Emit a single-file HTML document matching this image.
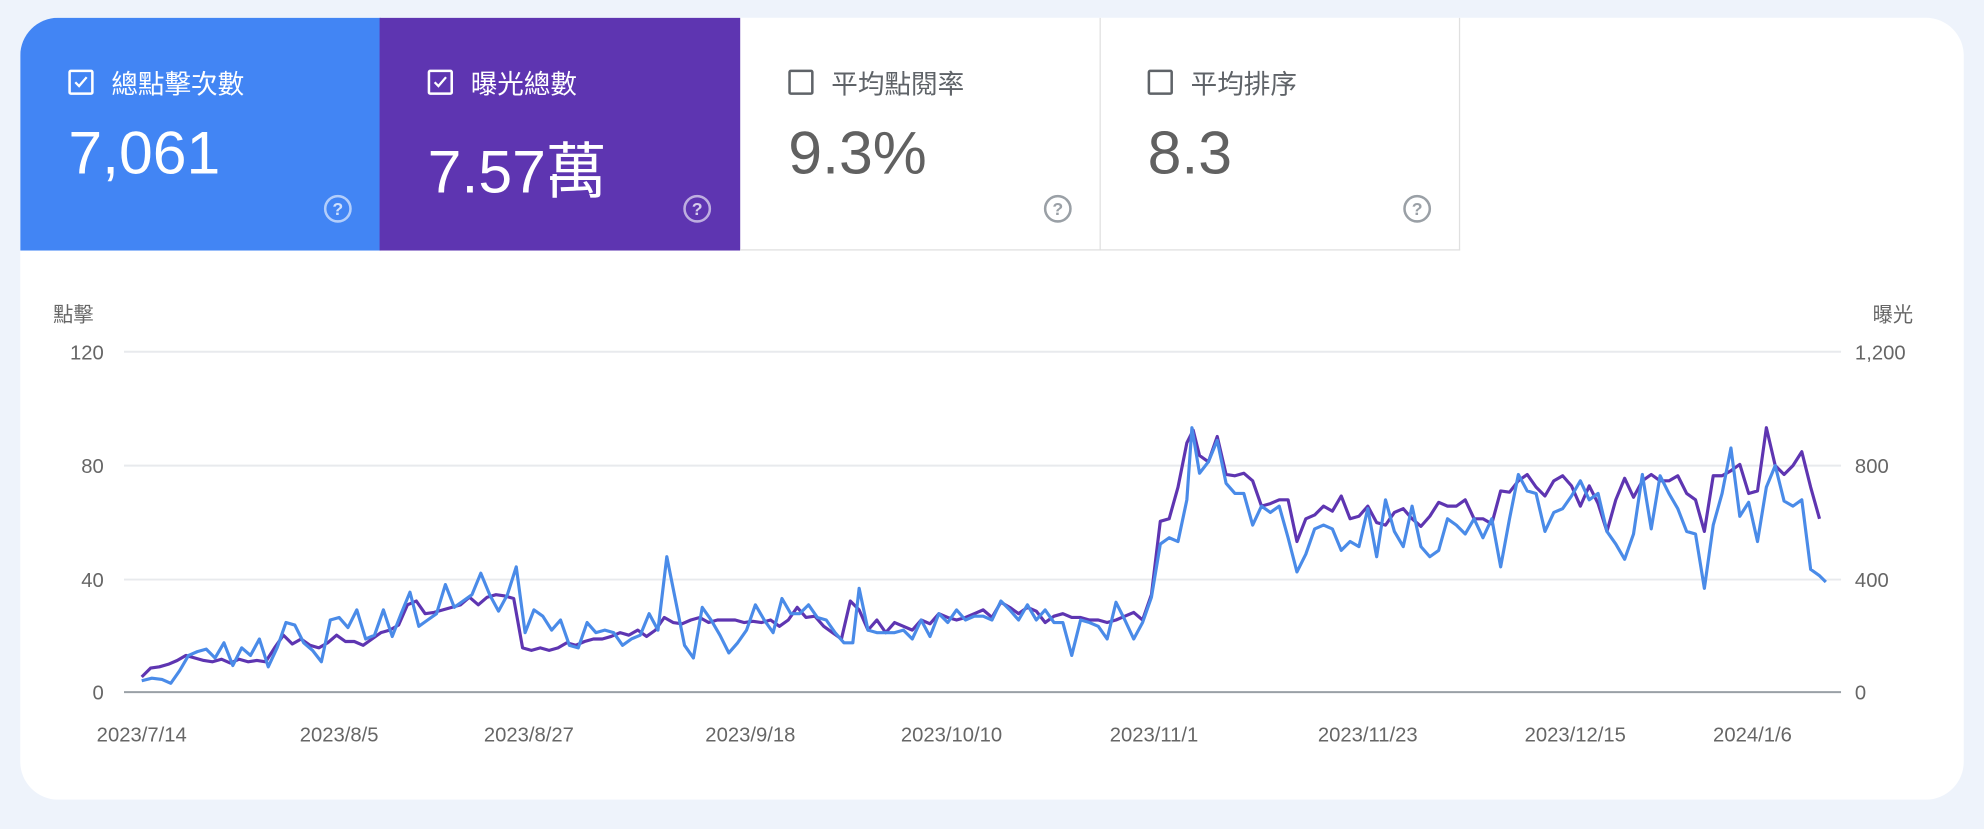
<!DOCTYPE html>
<html><head><meta charset="utf-8"><style>
html,body{margin:0;padding:0;}
body{width:1984px;height:828px;overflow:hidden;background:#eef3fb;font-family:"Liberation Sans","Noto Sans CJK TC",sans-serif;}
#s{position:absolute;left:0;top:0;width:1568px;height:655px;transform:scale(1.26531);transform-origin:0 0;}
.card{position:absolute;left:16px;top:14px;width:1536px;height:618px;background:#fff;border-radius:30px;overflow:hidden;}
.tile{position:absolute;top:0;height:184px;width:285px;box-sizing:border-box;}
.cb{position:absolute;left:38px;top:41px;width:20px;height:20px;border:2px solid #fff;border-radius:2px;box-sizing:border-box;}
.lbl{position:absolute;left:72px;top:37px;font-size:21px;color:#fff;}
.val{position:absolute;left:38px;top:80px;font-size:48px;color:#fff;}
.hp{position:absolute;left:240px;top:140px;width:22px;height:22px;border:2px solid rgba(255,255,255,.6);border-radius:50%;box-sizing:border-box;font-size:14px;line-height:18px;text-align:center;color:rgba(255,255,255,.75);font-weight:bold}
.w .cb{border-color:#5f6368}.w .lbl{color:#5f6368}.w .val{color:#616161}.w .hp{border-color:#9aa0a6;color:#9aa0a6}
</style></head><body><div id="s">
<div class="card">
<div class="tile" style="left:0;background:#4285f4"><div class="cb"><svg width="16" height="16" viewBox="0 0 16 16" style="position:absolute;left:0;top:0"><path d="M3.5 8l3 3 6-7" stroke="#fff" stroke-width="1.8" fill="none"/></svg></div><div class="lbl">總點擊次數</div><div class="val">7,061</div><div class="hp">?</div></div>
<div class="tile" style="left:284px;background:#5e35b1"><div class="cb"><svg width="16" height="16" viewBox="0 0 16 16" style="position:absolute;left:0;top:0"><path d="M3.5 8l3 3 6-7" stroke="#fff" stroke-width="1.8" fill="none"/></svg></div><div class="lbl">曝光總數</div><div class="val" style="top:82px">7.57萬</div><div class="hp">?</div></div>
<div class="tile w" style="left:569px;border-right:1px solid #e0e0e0;border-bottom:1px solid #e0e0e0"><div class="cb"></div><div class="lbl">平均點閱率</div><div class="val">9.3%</div><div class="hp">?</div></div>
<div class="tile w" style="left:853px;border-right:1px solid #e0e0e0;border-bottom:1px solid #e0e0e0"><div class="cb"></div><div class="lbl">平均排序</div><div class="val">8.3</div><div class="hp">?</div></div>
</div>
<svg style="position:absolute;left:0;top:0" width="1568" height="655" font-family="Liberation Sans, Noto Sans CJK TC, sans-serif" font-size="16" fill="#666">
<text x="42" y="254">點擊</text><text x="1480" y="254">曝光</text>
<g stroke="#e8eaed" stroke-width="1.5"><line x1="98" y1="278" x2="1455" y2="278"/><line x1="98" y1="368" x2="1455" y2="368"/><line x1="98" y1="458" x2="1455" y2="458"/></g>
<line x1="98" y1="547" x2="1455" y2="547" stroke="#9aa0a6" stroke-width="1.5"/>
<g text-anchor="end"><text x="82" y="284">120</text><text x="82" y="374">80</text><text x="82" y="464">40</text><text x="82" y="553">0</text></g>
<g><text x="1466" y="284">1,200</text><text x="1466" y="374">800</text><text x="1466" y="464">400</text><text x="1466" y="553">0</text></g>
<g text-anchor="middle"><text x="112" y="586">2023/7/14</text><text x="268" y="586">2023/8/5</text><text x="418" y="586">2023/8/27</text><text x="593" y="586">2023/9/18</text><text x="752" y="586">2023/10/10</text><text x="912" y="586">2023/11/1</text><text x="1081" y="586">2023/11/23</text><text x="1245" y="586">2023/12/15</text><text x="1385" y="586">2024/1/6</text></g>
<polyline fill="none" stroke="#5e35b1" stroke-width="2.5" stroke-linejoin="round" points="112,535 119,528 126,527 133,525 140,522 147,518 154,520 161,522 168,523 175,521 182,524 189,521 196,523 203,522 210,523 217,512 224,502 231,509 238,505 245,510 252,512 259,508 266,502 273,507 280,507 287,510 294,505 301,500 308,498 315,494 322,478 329,475 336,485 343,484 350,482 357,480 364,478 371,472 378,478 385,472 392,470 399,471 406,473 413,512 420,514 427,512 434,514 441,512 448,508 455,510 462,507 469,505 476,505 483,503 490,500 497,502 504,498 511,503 518,498 525,488 532,492 539,493 546,490 553,488 560,492 567,490 574,490 581,490 588,492 595,491 602,492 609,490 616,495 623,490 630,480 637,488 644,487 651,495 658,500 665,505 672,475 679,482 686,498 693,490 700,500 707,492 714,495 721,498 728,490 735,493 742,485 749,488 756,490 763,488 770,485 777,482 784,488 791,476 798,480 805,485 812,480 819,483 826,492 833,487 840,485 847,488 854,488 861,490 868,490 875,492 882,490 889,487 896,484 903,490 910,470 917,412 924,410 931,385 938,350 943,340 948,360 955,365 962,345 969,375 976,376 983,374 990,380 997,400 1004,398 1011,395 1018,395 1025,428 1032,410 1039,407 1046,400 1053,404 1060,392 1067,410 1074,408 1081,400 1088,413 1095,415 1102,405 1109,402 1116,410 1123,416 1130,408 1137,397 1144,400 1151,400 1158,395 1165,410 1172,410 1179,414 1186,388 1193,389 1200,380 1207,375 1214,385 1221,392 1228,380 1235,376 1242,384 1249,400 1256,384 1263,398 1270,420 1277,395 1284,378 1291,393 1298,380 1305,375 1312,380 1319,380 1326,376 1333,390 1340,395 1347,420 1354,376 1361,376 1368,372 1375,367 1382,390 1389,388 1396,338 1403,368 1410,375 1417,368 1424,357 1431,385 1438,410"/>
<polyline fill="none" stroke="#4a8be8" stroke-width="2.5" stroke-linejoin="round" points="112,538 120,536 128,537 135,540 142,530 149,518 156,515 163,513 170,520 177,508 184,526 191,512 198,518 205,505 212,527 219,512 226,492 233,494 240,508 247,514 254,523 261,490 268,488 275,496 282,482 289,505 296,502 303,482 310,503 317,485 324,468 331,495 338,490 345,485 352,462 359,480 366,475 373,470 380,453 387,470 394,483 401,470 408,448 415,500 422,482 429,487 436,498 443,490 450,510 457,512 464,492 471,500 478,498 485,500 492,510 499,505 506,502 513,485 520,498 527,440 534,475 541,510 548,520 555,480 562,490 569,502 576,516 583,508 590,498 597,478 604,490 611,500 618,473 625,485 632,485 639,478 646,488 653,490 660,500 667,508 674,508 679,465 686,498 693,500 700,500 707,500 714,498 721,505 728,490 735,503 742,485 749,492 756,482 763,490 770,487 777,487 784,490 791,475 798,482 805,490 812,478 819,490 826,482 833,492 840,492 847,518 854,490 861,492 868,495 875,505 882,476 889,490 896,505 903,492 910,472 917,430 924,425 931,428 938,395 942,338 948,374 955,365 962,348 969,382 976,390 983,390 990,415 997,400 1004,405 1011,400 1018,425 1025,452 1032,438 1039,418 1046,415 1053,418 1060,435 1067,428 1074,432 1081,402 1088,440 1095,395 1102,420 1109,432 1116,400 1123,432 1130,440 1137,435 1144,410 1151,415 1158,422 1165,410 1172,425 1179,410 1186,448 1193,410 1200,375 1207,388 1214,390 1221,420 1228,405 1235,402 1242,392 1249,380 1256,395 1263,390 1270,420 1277,430 1284,442 1291,422 1298,375 1305,418 1312,376 1319,390 1326,402 1333,420 1340,422 1347,465 1354,415 1361,390 1368,354 1375,408 1382,397 1389,428 1396,385 1403,368 1410,396 1417,400 1424,395 1431,450 1438,455 1443,460"/>
</svg>
</div></body></html>
